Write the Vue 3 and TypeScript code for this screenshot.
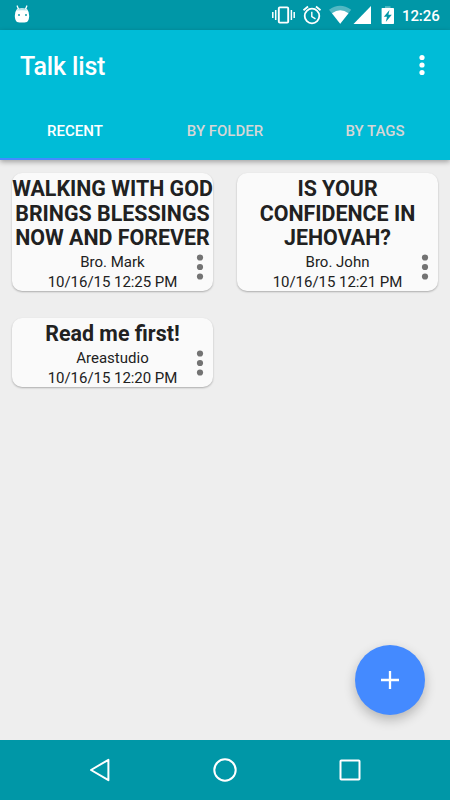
<script setup lang="ts">
import { ref } from 'vue'

interface Talk {
  lines: string[]
  speaker: string
  date: string
}

const tabs: string[] = ['RECENT', 'BY FOLDER', 'BY TAGS']
const activeTab = ref(0)

const talks: Talk[] = [
  { lines: ['WALKING WITH GOD', 'BRINGS BLESSINGS', 'NOW AND FOREVER'], speaker: 'Bro. Mark', date: '10/16/15 12:25 PM' },
  { lines: ['IS YOUR', 'CONFIDENCE IN', 'JEHOVAH?'], speaker: 'Bro. John', date: '10/16/15 12:21 PM' },
  { lines: ['Read me first!'], speaker: 'Areastudio', date: '10/16/15 12:20 PM' },
]
</script>

<template>
  <div class="screen">
    <div class="status">
      <svg class="droid" width="16" height="18" viewBox="0 0 16 18">
        <path d="M3.2 1 4.8 5M12.8 1 11.2 5" stroke="#fff" stroke-width="1.3" stroke-linecap="round" />
        <path d="M3 4Q8 2.6 13 4Q15.4 7 15.2 11Q15 15.5 13 17Q8 18 3 17Q1 15.5.8 11Q.6 7 3 4Z" fill="#fff" />
        <path d="M3.2 4.4Q8 3.2 12.8 4.4L13.4 5.6Q8 4.8 2.6 5.6Z" fill="#b5e2e7" />
        <path d="M4 9h2v2H4zM11 9h2v2h-2z" fill="#4db5c0" />
      </svg>
      <svg class="tray" width="124" height="20" viewBox="272 5 124 20">
        <rect x="278.8" y="7.4" width="9.4" height="15.2" rx="1" fill="none" stroke="#fff" stroke-width="1.9" />
        <path d="M275.7 10v10M291.4 10v10M272.8 12v6M294.2 12v6" stroke="#fff" stroke-width="1.5" />
        <circle cx="312" cy="16" r="7.3" fill="none" stroke="#fff" stroke-width="1.8" />
        <path d="M311.8 11.7v4.9l3.7 2.2" fill="none" stroke="#fff" stroke-width="1.4" />
        <path d="M303.5 10.2 308 6.5M320.5 10.2 316 6.5" stroke="#fff" stroke-width="1.8" />
        <path d="M329 9.7Q340 2 351.2 9.7L340.2 23.8Z" fill="#fff" opacity=".32" />
        <path d="M332 13.3Q340.2 7 348.5 13.3L340.2 23.8Z" fill="#fff" />
        <path d="M371 6v18h-17.5Z" fill="#fff" />
        <path d="M385 6.2h5.5v2H385z" fill="#fff" opacity=".35" />
        <path d="M382.3 8h11q.7 0 .7.7v14.6q0 .7-.7.7h-11q-.7 0-.7-.7V8.7q0-.7.7-.7Z" fill="#fff" />
        <path d="M389.5 10 383.8 16.8h3.2L385.8 22 391.8 14.8h-3.4Z" fill="#0097a7" />
      </svg>
      <span class="clock">12:26</span>
    </div>

    <header class="appbar">
      <div class="toolbar">
        <h1>Talk list</h1>
        <svg width="6" height="22" viewBox="0 0 6 22" fill="#fff">
          <circle cx="3" cy="3.5" r="2.6" /><circle cx="3" cy="11" r="2.6" /><circle cx="3" cy="18.5" r="2.6" />
        </svg>
      </div>
      <nav class="tabs">
        <button v-for="(tab, i) in tabs" :key="tab" :class="{ active: i === activeTab }" @click="activeTab = i">
          {{ tab }}
        </button>
      </nav>
    </header>

    <main class="grid">
      <article v-for="talk in talks" :key="talk.date" class="card">
        <h2><span v-for="line in talk.lines" :key="line">{{ line }}</span></h2>
        <p>{{ talk.speaker }}</p>
        <p class="date">{{ talk.date }}</p>
        <svg class="more" width="8" height="28" viewBox="0 0 8 28" fill="#737373">
          <circle cx="4" cy="4.5" r="3.1" /><circle cx="4" cy="14" r="3.1" /><circle cx="4" cy="23.5" r="3.1" />
        </svg>
      </article>
    </main>

    <button class="fab" aria-label="Add">
      <svg width="20" height="20" viewBox="0 0 20 20"><path d="M10 1v18M1 10h18" stroke="#fff" stroke-width="2.3" /></svg>
    </button>

    <footer class="navbar">
      <svg width="24" height="26" viewBox="0 0 24 26"><path d="M20.4 2.8v20.4L3 13Z" fill="none" stroke="#fff" stroke-width="2" stroke-linejoin="round" /></svg>
      <svg width="26" height="26" viewBox="0 0 26 26"><circle cx="13" cy="13" r="10.7" fill="none" stroke="#fff" stroke-width="2" /></svg>
      <svg width="24" height="24" viewBox="0 0 24 24"><rect x="2.5" y="2.5" width="19" height="19" rx=".8" fill="none" stroke="#fff" stroke-width="2" /></svg>
    </footer>
  </div>
</template>

<style>
body {
  margin: 0;
}
</style>

<style scoped>
.screen {
  position: relative;
  display: flex;
  flex-direction: column;
  width: 450px;
  height: 800px;
  overflow: hidden;
  background: #eee;
  font-family: Roboto, sans-serif;
  color: #212121;
}
.status {
  display: flex;
  align-items: center;
  box-sizing: border-box;
  height: 30px;
  padding: 0 11px 0 14px;
  background: #0097a7;
}
.droid {
  margin-top: -2px;
}
.tray {
  margin-left: auto;
}
.clock {
  width: 37px;
  margin: 2px 0 0 6px;
  color: #fff;
  font-size: 15px;
  font-weight: 500;
  letter-spacing: -0.1px;
  line-height: 20px;
  white-space: nowrap;
}
.appbar {
  position: relative;
  height: 130px;
  background: #00bcd7;
  box-shadow: 0 2px 5px rgba(0, 0, 0, 0.32);
}
.toolbar {
  display: flex;
  align-items: center;
  justify-content: space-between;
  height: 70px;
  padding: 0 25px 0 20px;
}
h1 {
  margin: 3px 0 0;
  color: #fff;
  font-size: 25px;
  font-weight: 500;
  letter-spacing: -0.15px;
  line-height: 30px;
}
.tabs {
  display: grid;
  grid-template-columns: repeat(3, 1fr);
  height: 60px;
}
.tabs button {
  padding: 4px 0 0;
  border: 0;
  border-bottom: 2px solid transparent;
  background: none;
  color: #d6d6d6;
  font: 500 15px Roboto, sans-serif;
}
.tabs .active {
  border-color: #448aff;
  color: #fff;
}
.grid {
  display: grid;
  flex: 1;
  grid-template-columns: repeat(2, 201px);
  gap: 26.7px 24px;
  align-content: start;
  padding: 13.3px 12px 0;
}
.card {
  position: relative;
  display: flow-root;
  padding: 4px 0 0;
  border-radius: 10px;
  background: #fafafa;
  box-shadow: 0 1px 2px rgba(0, 0, 0, 0.28);
  text-align: center;
}
h2 {
  margin: 0 0 1px;
  font-size: 21.4px;
  font-weight: 700;
  line-height: 24.6px;
}
h2 span {
  display: block;
  white-space: nowrap;
}
p {
  margin: 0;
  font-size: 15px;
  line-height: 20.3px;
}
.date {
  margin-bottom: -1.2px;
  letter-spacing: -0.04px;
}
.more {
  position: absolute;
  right: 9px;
  bottom: 10.4px;
}
.fab {
  position: absolute;
  right: 25px;
  bottom: 85px;
  display: grid;
  place-items: center;
  width: 70px;
  height: 70px;
  padding: 0;
  border: 0;
  border-radius: 50%;
  background: #448aff;
  box-shadow: 0 5px 12px rgba(0, 0, 0, 0.24);
}
.navbar {
  display: flex;
  align-items: center;
  justify-content: space-between;
  height: 60px;
  padding: 0 88px;
  background: #0097a7;
}
</style>
